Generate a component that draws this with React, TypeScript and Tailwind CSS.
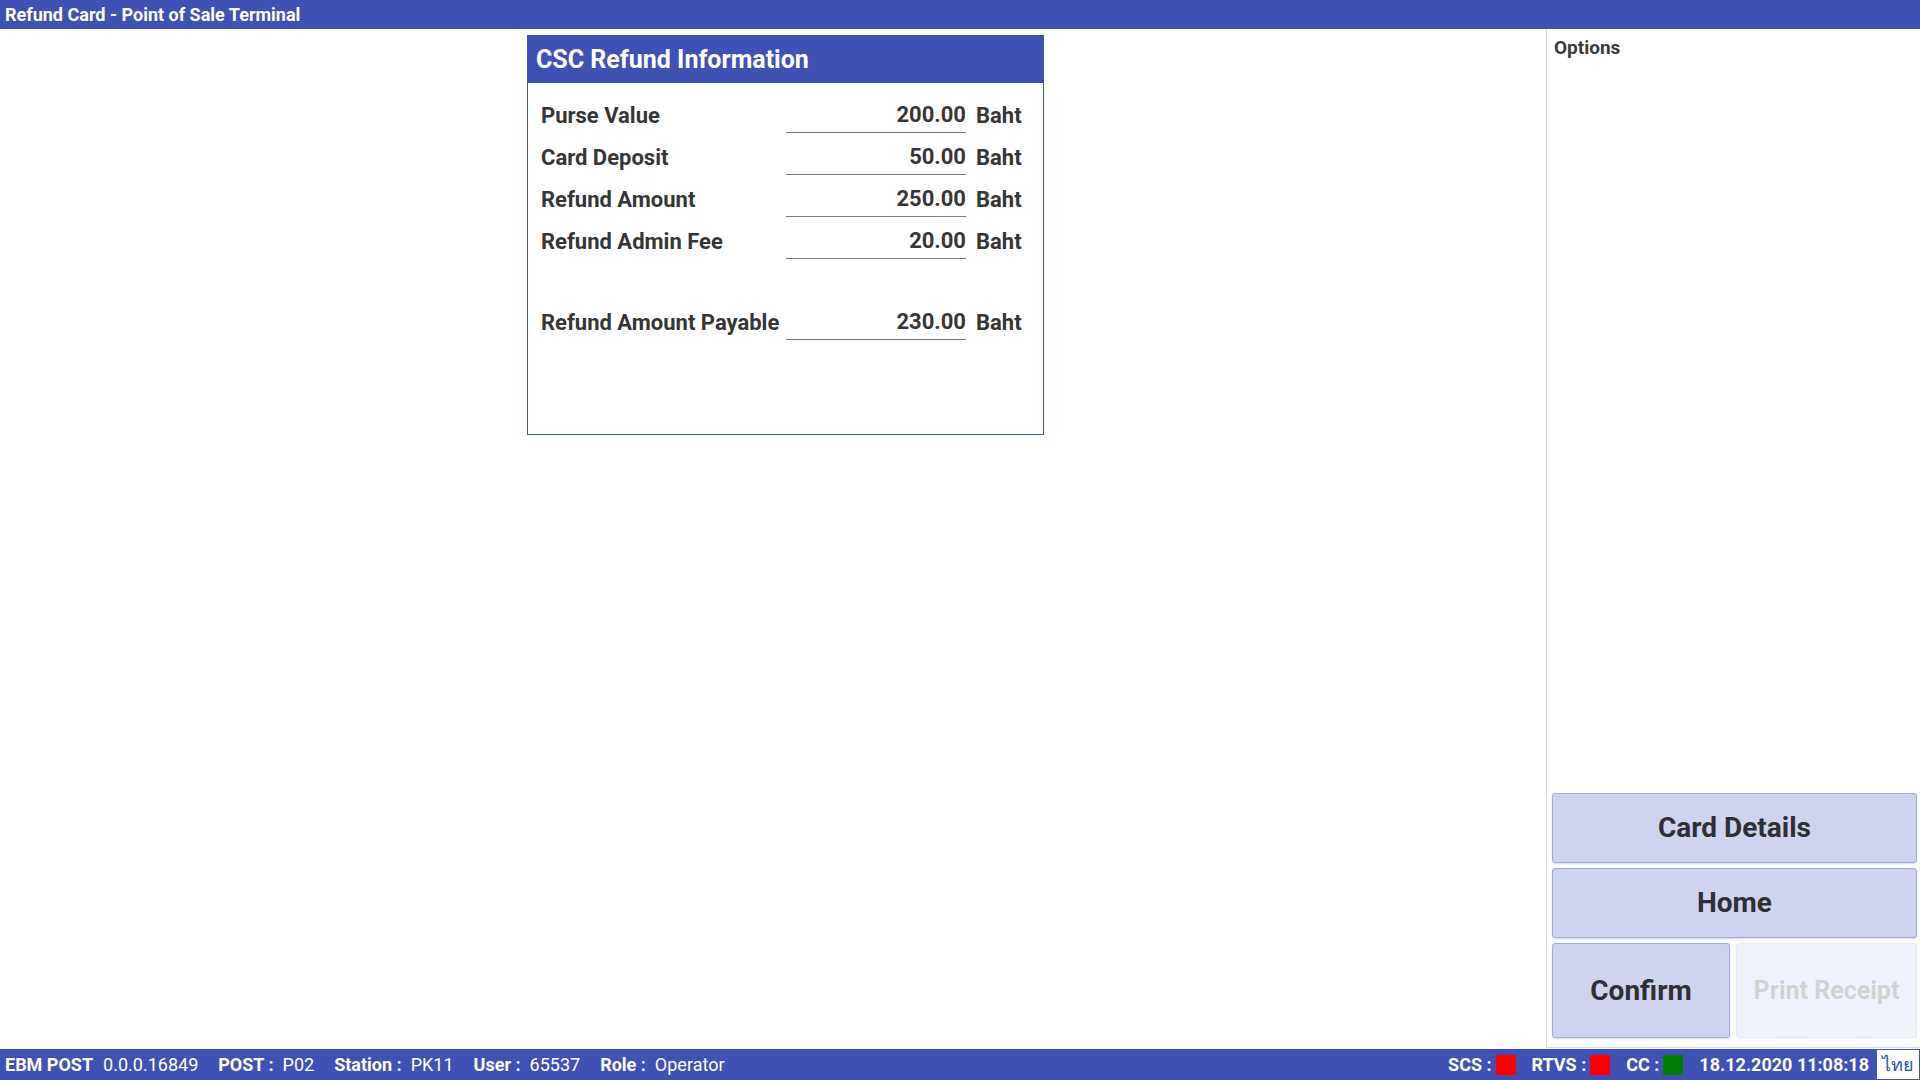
const rows = [
  { label: "Purse Value", value: "200.00" },
  { label: "Card Deposit", value: "50.00" },
  { label: "Refund Amount", value: "250.00" },
  { label: "Refund Admin Fee", value: "20.00" },
];

const AmountRow = ({
  label,
  value,
  extra,
}: {
  label: string;
  value: string;
  extra?: boolean;
}) => (
  <div className={`flex items-end h-[42px] ${extra ? "mt-[39px]" : ""}`}>
    <div className="w-[245px] pb-[5px] leading-[25px]">{label}</div>
    <div className="w-[180px] border-b border-[#7a7a7a] text-right pb-[5px] leading-[25px]">
      {value}
    </div>
    <div className="ml-[10px] pb-[5px] leading-[25px]">Baht</div>
  </div>
);

const Status = ({ label, color }: { label: string; color: string }) => (
  <div className="flex items-center">
    <span className="font-bold">{label} :</span>
    <span className={`ml-[4px] w-[20px] h-[20px] ${color}`}></span>
  </div>
);

const Info = ({ label, value }: { label: string; value: string }) => (
  <div className="flex items-center gap-[9px]">
    <span className="font-bold">{label} :</span>
    <span>{value}</span>
  </div>
);

export default function App() {
  return (
    <div className="w-[1920px] h-[1080px] flex flex-col bg-white text-[#363636] font-['Roboto','Liberation_Sans',sans-serif] overflow-hidden">
      <div className="h-[29px] shrink-0 bg-[#3f51b5] text-white font-bold text-[18px] leading-[30px] pl-[5px]">
        Refund Card - Point of Sale Terminal
      </div>

      <div className="flex-1 flex min-h-0">
        <main className="flex-1 pl-[527px] pt-[6px]">
          <div className="w-[517px] h-[400px] border border-[#3f51b5]">
            <div className="h-[47px] bg-[#3f51b5] text-white font-bold text-[25px] leading-[47px] pl-[8px]">
              CSC Refund Information
            </div>
            <div className="pl-[13px] pt-[8px] font-bold text-[22px]">
              {rows.map((r) => (
                <AmountRow key={r.label} label={r.label} value={r.value} />
              ))}
              <AmountRow label="Refund Amount Payable" value="230.00" extra />
            </div>
          </div>
        </main>

        <aside className="w-[374px] shrink-0 border-l border-b border-[#d9d9d9] flex flex-col pl-[5px] pr-[3px] pb-[9px] mb-[1px]">
          <div className="pl-[2px] pt-[5px] text-[19px] font-bold text-[#3a3a3a]">Options</div>
          <div className="mt-auto flex flex-col gap-[5px] font-bold text-[28px] text-[#2f2f35]">
            <button className="h-[70px] rounded-[3px] bg-[#cfd3f0] border border-[#a4acdf] shadow-[0_1px_2px_rgba(0,0,0,0.15)]">
              Card Details
            </button>
            <button className="h-[70px] rounded-[3px] bg-[#cfd3f0] border border-[#a4acdf] shadow-[0_1px_2px_rgba(0,0,0,0.15)]">
              Home
            </button>
            <div className="flex gap-[6px] h-[95px]">
              <button className="w-[178px] rounded-[3px] bg-[#cfd3f0] border border-[#a4acdf] shadow-[0_1px_2px_rgba(0,0,0,0.15)]">
                Confirm
              </button>
              <button className="flex-1 rounded-[3px] bg-[#eff2fb] border border-[#e6e9f4] text-[#d2d2d2] text-[25px]">
                Print Receipt
              </button>
            </div>
          </div>
        </aside>
      </div>

      <footer className="h-[31px] shrink-0 bg-[#3f51b5] text-white text-[18px] flex items-center">
        <div className="flex items-center pl-[5px] gap-[20px]">
          <div className="flex items-center gap-[10px]">
            <span className="font-bold">EBM POST</span>
            <span>0.0.0.16849</span>
          </div>
          <Info label="POST" value="P02" />
          <Info label="Station" value="PK11" />
          <Info label="User" value="65537" />
          <Info label="Role" value="Operator" />
        </div>
        <div className="ml-auto flex items-center gap-[16px] font-bold">
          <Status label="SCS" color="bg-[#ff0000]" />
          <Status label="RTVS" color="bg-[#ff0000]" />
          <Status label="CC" color="bg-[#008000]" />
          <span>18.12.2020 11:08:18</span>
        </div>
        <div className="ml-[7px] w-[44px] h-[31px] bg-white border border-[#3f51b5] text-[#1f5aa8] text-[18px] flex items-center justify-center">
          ไทย
        </div>
      </footer>
    </div>
  );
}
